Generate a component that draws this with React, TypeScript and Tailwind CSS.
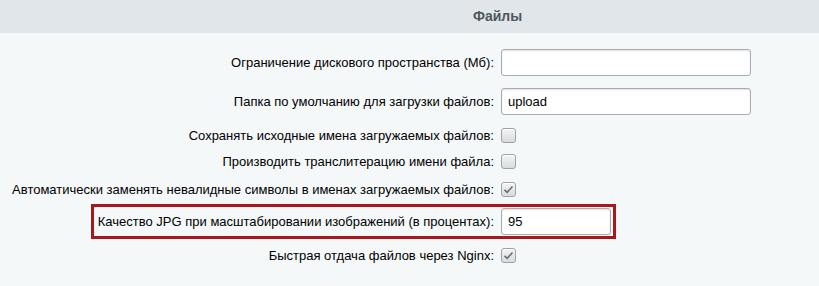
import React from "react";

function Check({ checked }: { checked?: boolean }) {
  return (
    <span className="flex h-[15px] w-[15px] items-center justify-center rounded-[3px] border border-[#9fa3a6] bg-gradient-to-b from-[#f4f4f4] to-[#d9dbdc] shadow-[inset_0_1px_0_#fff]">
      {checked && (
        <svg width="11" height="9" viewBox="0 0 11 9" fill="none">
          <path d="M1.5 4.8 L4.2 7.3 L9.5 1.5" stroke="#6b6f72" strokeWidth="1.6" />
        </svg>
      )}
    </span>
  );
}

function TextInput({ value, width }: { value?: string; width: string }) {
  return (
    <div
      className={`${width} flex h-[27px] items-center rounded-[3px] border border-[#a6adb2] bg-white pl-[6px] text-[13px] text-black shadow-[inset_0_1px_2px_rgba(0,0,0,0.12)]`}
    >
      {value}
    </div>
  );
}

export default function App() {
  return (
    <div className="h-[286px] w-[819px] overflow-hidden bg-[#f5f8f9] text-[13px] leading-[15px] text-black" style={{ fontFamily: '"Liberation Sans", Arial, sans-serif' }}>
      {/* Section header */}
      <div className="flex h-[33px] items-center bg-[#e0e6e9] pl-[473px]">
        <span className="text-[14px] font-bold text-[#4f585d]">Файлы</span>
      </div>

      <div className="flex flex-col">
        <div className="mt-[16px] flex items-center gap-[7px]">
          <div className="w-[494px] text-right">Ограничение дискового пространства (Мб):</div>
          <TextInput width="w-[250px]" />
        </div>

        <div className="mt-[12px] flex items-center gap-[7px]">
          <div className="w-[494px] text-right">Папка по умолчанию для загрузки файлов:</div>
          <TextInput width="w-[250px]" value="upload" />
        </div>

        <div className="mt-[13px] flex items-center gap-[7px]">
          <div className="w-[494px] text-right">Сохранять исходные имена загружаемых файлов:</div>
          <Check />
        </div>

        <div className="mt-[11px] flex items-center gap-[7px]">
          <div className="w-[494px] text-right">Производить транслитерацию имени файла:</div>
          <Check />
        </div>

        <div className="mt-[13px] flex items-center gap-[7px]">
          <div className="w-[494px] text-right">Автоматически заменять невалидные символы в именах загружаемых файлов:</div>
          <Check checked />
        </div>

        {/* highlighted row */}
        <div className="ml-[91px] mt-[7px] flex w-[525px] items-center gap-[7px] border-[3px] border-[#a8171a] py-px pr-[2px]">
          <div className="w-[400px] text-right">Качество JPG при масштабировании изображений (в процентах):</div>
          <TextInput width="w-[110px]" value="95" />
        </div>

        <div className="mt-[9px] flex items-center gap-[7px]">
          <div className="w-[494px] text-right">Быстрая отдача файлов через Nginx:</div>
          <Check checked />
        </div>
      </div>
    </div>
  );
}
